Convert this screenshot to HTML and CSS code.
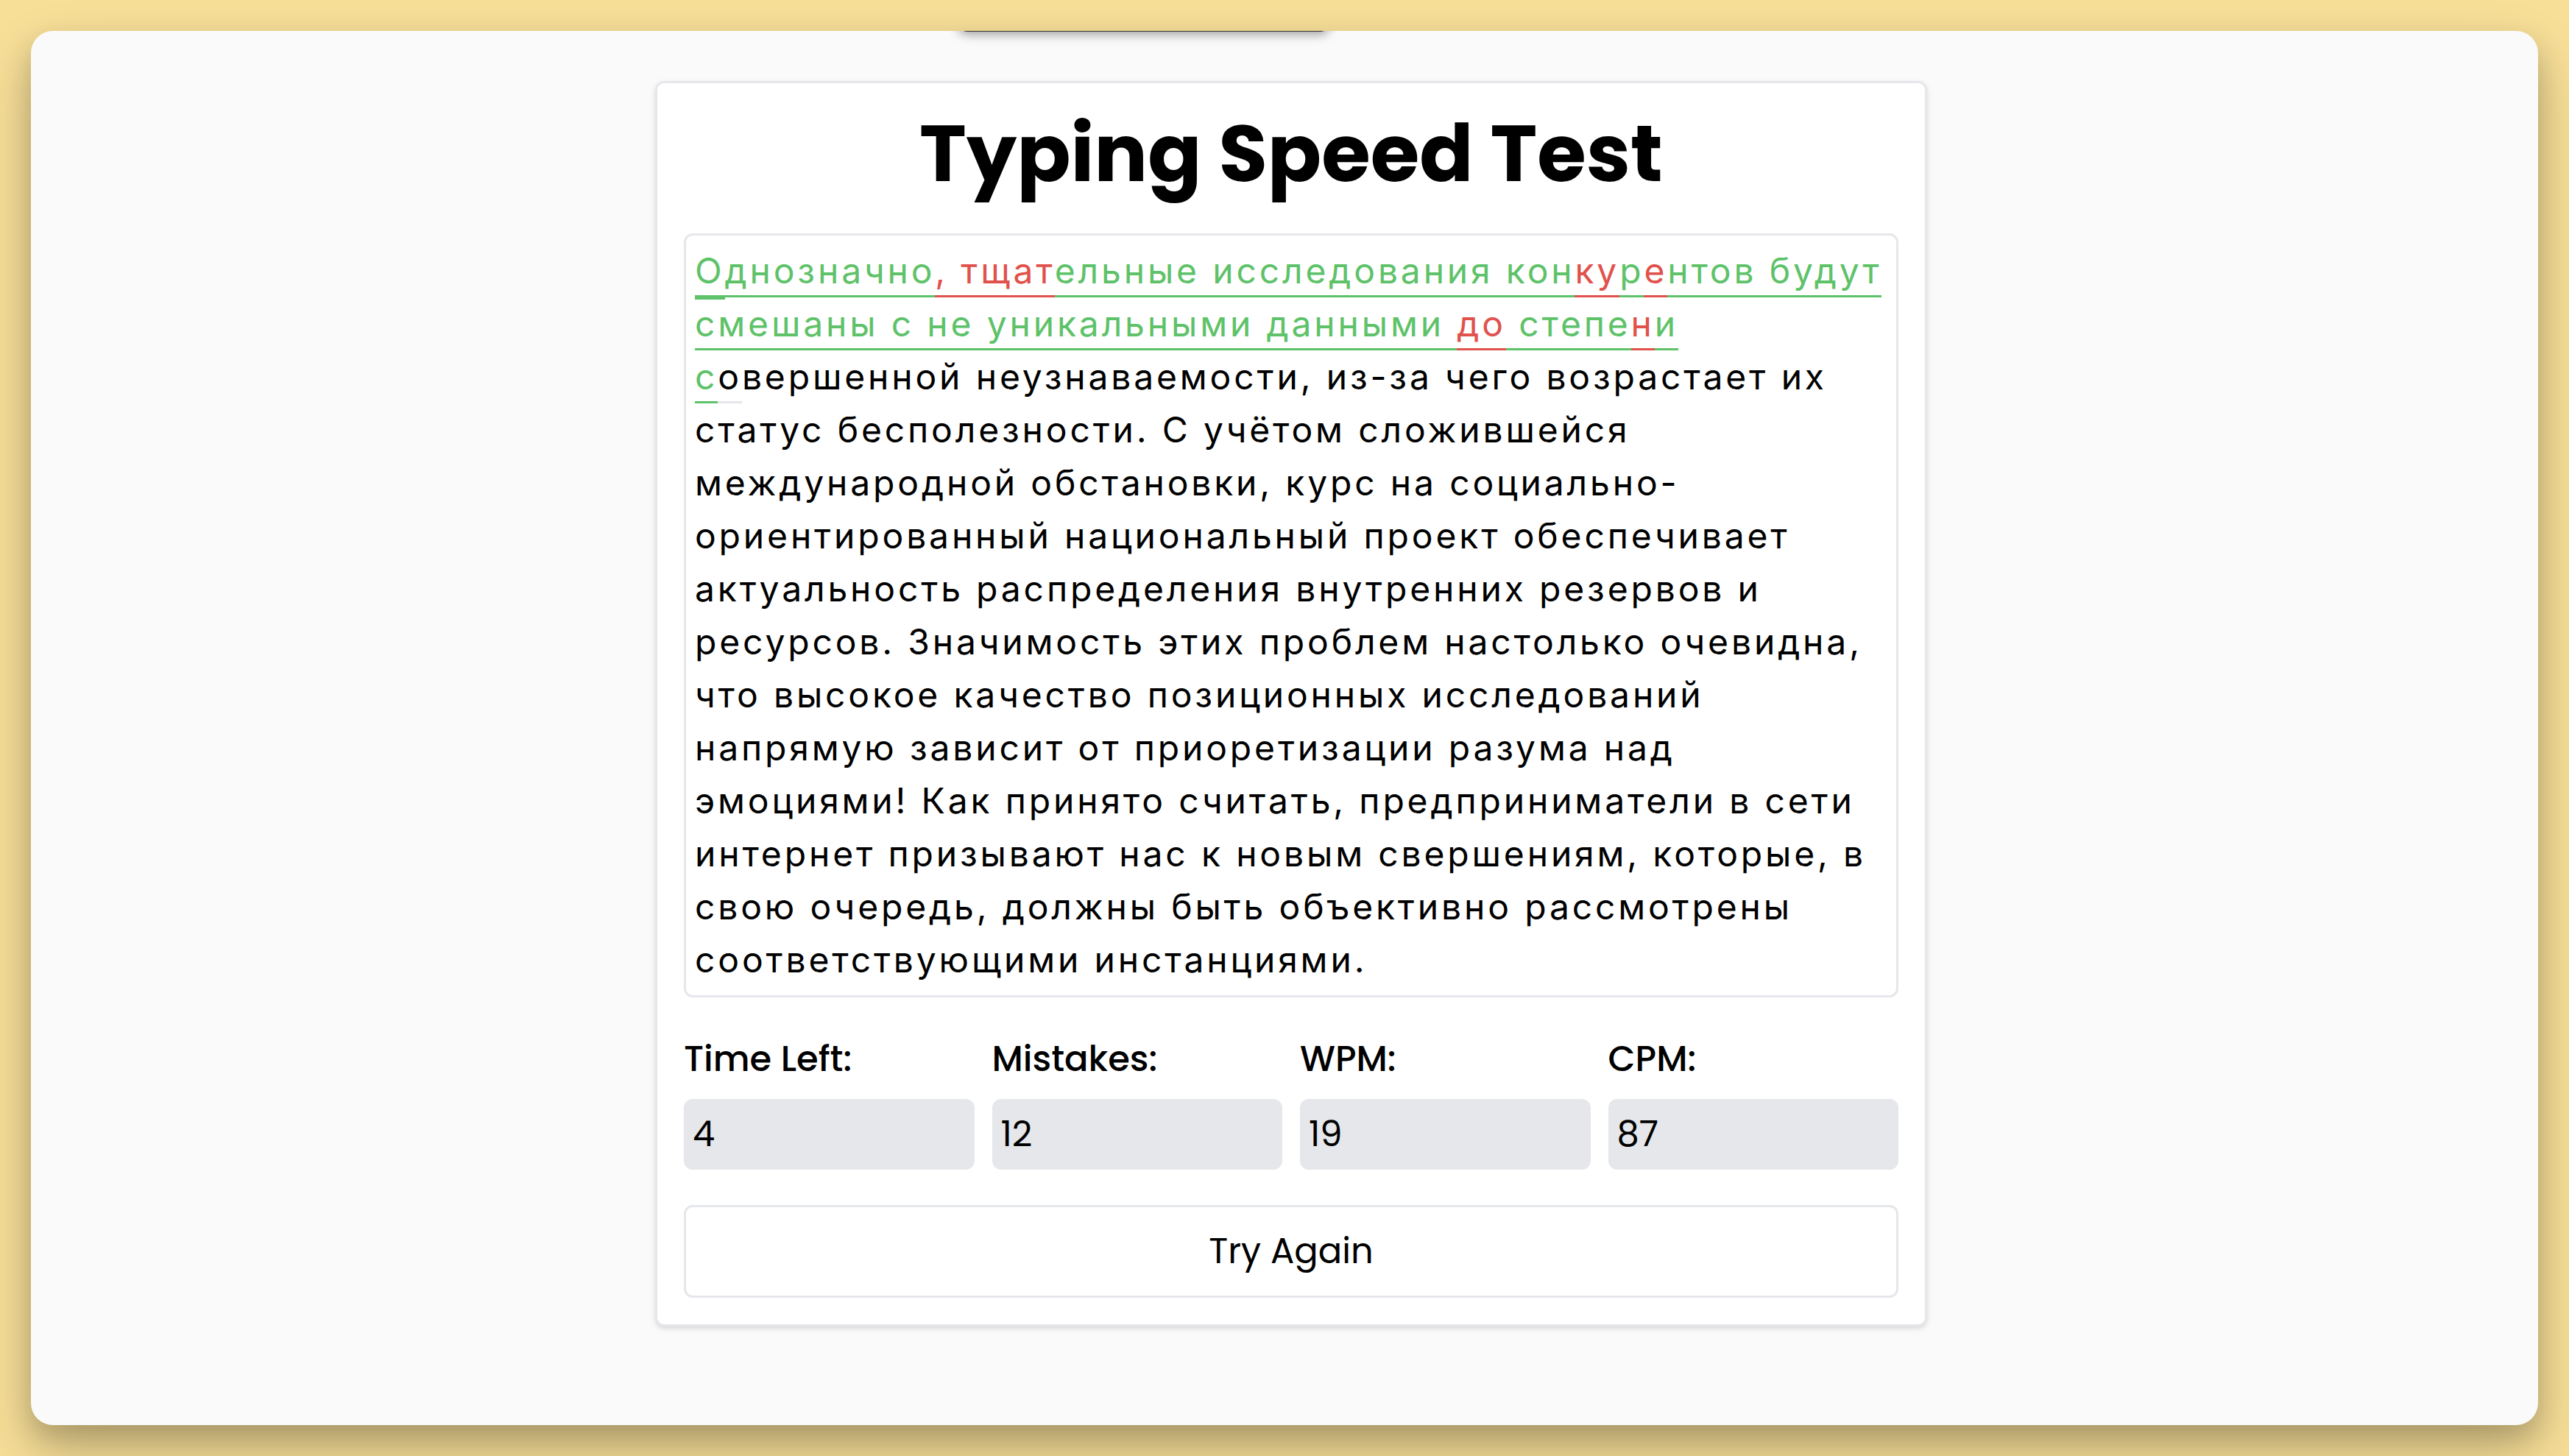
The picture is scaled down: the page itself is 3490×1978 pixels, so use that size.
FILE: index.html
```html
<!DOCTYPE html>
<html lang="ru">
<head>
  <meta charset="utf-8">
  <title>Typing Speed Test</title>
  <link rel="stylesheet" href="styles.css">
</head>
<body>
  <div class="window">
    <div class="toast" role="status"></div>
    <main class="card">
      <h1 class="title">Typing Speed Test</h1>
      <p class="quote"><span class="ok first">О</span><span class="ok">днозначно</span><span class="bad">, тщат</span><span class="ok">ельные исследования кон</span><span class="bad">ку</span><span class="ok">р</span><span class="bad">е</span><span class="ok">нтов будут</span><br>
<span class="ok">смешаны с не уникальными данными </span><span class="bad">до</span><span class="ok"> степе</span><span class="bad">н</span><span class="ok">и</span><br>
<span class="ok">с</span><span class="current">о</span>вершенной неузнаваемости, из-за чего возрастает их<br>
статус бесполезности. С учётом сложившейся<br>
международной обстановки, курс на социально-<br>
ориентированный национальный проект обеспечивает<br>
актуальность распределения внутренних резервов и<br>
ресурсов. Значимость этих проблем настолько очевидна,<br>
что высокое качество позиционных исследований<br>
напрямую зависит от приоретизации разума над<br>
эмоциями! Как принято считать, предприниматели в сети<br>
интернет призывают нас к новым свершениям, которые, в<br>
свою очередь, должны быть объективно рассмотрены<br>
соответствующими инстанциями.</p>
      <dl class="stats">
        <div class="stat"><dt>Time Left:</dt><dd>4</dd></div>
        <div class="stat"><dt>Mistakes:</dt><dd>12</dd></div>
        <div class="stat"><dt>WPM:</dt><dd>19</dd></div>
        <div class="stat"><dt>CPM:</dt><dd>87</dd></div>
      </dl>
      <button class="retry" type="button">Try Again</button>
    </main>
  </div>
</body>
</html>
```
FILE: styles.css
```css
:root {
  --line: #e5e7eb;
  --ok: #5ec269;
  --bad: #e0524c;
}

* {
  box-sizing: border-box;
}

body {
  margin: 0;
  min-height: 100vh;
  padding: 42px;
  display: flex;
  background: #f7df98;
  color: #000;
  font: 400 48px/72px Poppins, Inter, sans-serif;
}

.window {
  position: relative;
  flex: 1;
  display: flex;
  justify-content: center;
  align-items: flex-start;
  padding: 68px 0 68px 18px;
  border-radius: 30px;
  background: #fafafa;
  box-shadow: 0 36px 80px rgba(0, 0, 0, 0.2), 0 18px 36px rgba(0, 0, 0, 0.17);
}

/* Notification tucked above the window, only its lower edge shows */
.toast {
  position: absolute;
  top: 0;
  left: 0;
  right: 0;
  height: 60px;
  overflow: hidden;
}

.toast::before {
  content: "";
  position: absolute;
  left: 37%;
  bottom: 59px;
  width: 504px;
  height: 144px;
  border-radius: 12px;
  background: #333;
  box-shadow: 0 3px 15px rgba(0, 0, 0, 0.4);
}

.card {
  position: relative;
  width: 100%;
  max-width: 1728px;
  padding: 36px;
  border: 3px solid var(--line);
  border-radius: 12px;
  background: #fff;
  box-shadow: 0 3px 9px rgba(0, 0, 0, 0.1), 0 3px 6px -3px rgba(0, 0, 0, 0.1);
}

.title {
  margin: 0 0 48px;
  font-size: 108px;
  font-weight: 700;
  line-height: 120px;
  text-align: center;
}

.quote {
  margin: 0 0 48px;
  padding: 12px;
  border: 3px solid var(--line);
  border-radius: 12px;
  font-family: Inter, sans-serif;
  letter-spacing: 0.08em;
}

.ok,
.bad,
.current {
  padding-bottom: 4px;
  border-bottom: 3px solid var(--line);
}

.ok {
  color: var(--ok);
  border-color: var(--ok);
}

.bad {
  color: var(--bad);
  border-color: var(--bad);
}

.first {
  border-bottom-width: 6px;
}

.stats {
  display: grid;
  grid-template-columns: repeat(4, 1fr);
  gap: 24px;
  margin: 0 0 48px;
}

.stat {
  display: grid;
  gap: 18px;
}

.stat dt {
  font-weight: 500;
}

.stat dd {
  margin: 0;
  padding: 12px;
  border-radius: 12px;
  background: var(--line);
}

.retry {
  display: block;
  width: 100%;
  padding: 24px;
  border: 3px solid var(--line);
  border-radius: 12px;
  background: #fff;
  color: inherit;
  font: inherit;
}
```
